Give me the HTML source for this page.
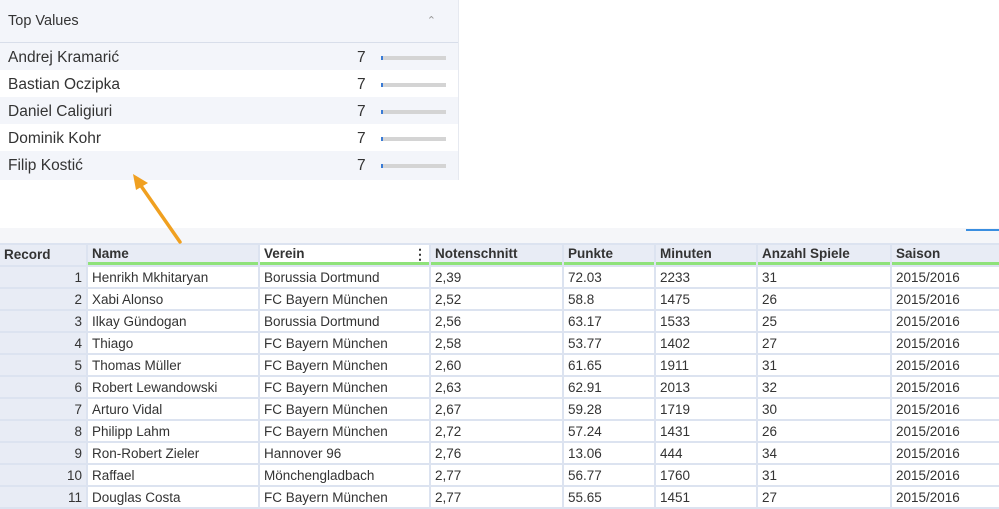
<!DOCTYPE html><html><head><style>
body{margin:0;width:999px;height:507px;overflow:hidden;background:#fff;font-family:"Liberation Sans",sans-serif;position:relative}
.panel{position:absolute;left:0;top:0;width:458px;height:180px;background:#f3f5fa;border-right:1px solid #e6e9f0}
.ph{height:42px;border-bottom:1px solid #d8deea;font-size:14.5px;color:#333;line-height:42px;padding-left:8px;position:relative}
.ph span{position:absolute;right:22px;top:0;color:#999;font-size:11px}
.r{height:27px;line-height:29px;font-size:15.5px;color:#333;padding-left:8px;position:relative}
.r.w{background:#fff}
.r b{font-weight:normal;position:absolute;left:357px}
.r i{position:absolute;left:381px;top:13px;width:63px;height:4px;background:#d4d4d4;border-left:2px solid #3a7bd5}
.strip{position:absolute;left:0;top:228px;width:999px;height:15px;background:#f5f6f9}
table{position:absolute;left:-2px;top:243px;border-collapse:separate;border-spacing:2px;background:#dce3f0;font-size:13.5px;color:#333;table-layout:fixed;width:1096px}
td,th{height:20px;padding:0 4px;white-space:nowrap;overflow:hidden;background:#fff;text-align:left}
th{background:#e8ecf5;font-weight:bold;height:16px;padding-top:1px;line-height:16px;border-bottom:3px solid #8fe27a;color:#333;vertical-align:bottom}
th.rec{border-bottom:none;height:20px;padding-top:0;vertical-align:middle}
td.rec{background:#e8ecf5;text-align:right}
</style></head><body>
<div class="panel"><div class="ph">Top Values<span>&#8963;</span></div>
<div class="r">Andrej Kramarić<b>7</b><i></i></div>
<div class="r w">Bastian Oczipka<b>7</b><i></i></div>
<div class="r">Daniel Caligiuri<b>7</b><i></i></div>
<div class="r w">Dominik Kohr<b>7</b><i></i></div>
<div class="r">Filip Kostić<b>7</b><i></i></div>
</div>
<div class="strip"></div>
<div style="position:absolute;left:966px;top:229px;width:33px;height:2px;background:#3a8ee0"></div>
<table>
<colgroup><col style="width:86px"><col style="width:170px"><col style="width:169px"><col style="width:131px"><col style="width:90px"><col style="width:100px"><col style="width:132px"><col style="width:200px"></colgroup>
<tr><th class="rec">Record</th><th>Name</th><th style="background:#fff;position:relative">Verein<span style="position:absolute;right:2px;font-size:14px">&#8942;</span></th><th>Notenschnitt</th><th>Punkte</th><th>Minuten</th><th>Anzahl Spiele</th><th>Saison</th></tr>
<tr><td class="rec">1</td><td>Henrikh Mkhitaryan</td><td>Borussia Dortmund</td><td>2,39</td><td>72.03</td><td>2233</td><td>31</td><td>2015/2016</td></tr>
<tr><td class="rec">2</td><td>Xabi Alonso</td><td>FC Bayern München</td><td>2,52</td><td>58.8</td><td>1475</td><td>26</td><td>2015/2016</td></tr>
<tr><td class="rec">3</td><td>Ilkay Gündogan</td><td>Borussia Dortmund</td><td>2,56</td><td>63.17</td><td>1533</td><td>25</td><td>2015/2016</td></tr>
<tr><td class="rec">4</td><td>Thiago</td><td>FC Bayern München</td><td>2,58</td><td>53.77</td><td>1402</td><td>27</td><td>2015/2016</td></tr>
<tr><td class="rec">5</td><td>Thomas Müller</td><td>FC Bayern München</td><td>2,60</td><td>61.65</td><td>1911</td><td>31</td><td>2015/2016</td></tr>
<tr><td class="rec">6</td><td>Robert Lewandowski</td><td>FC Bayern München</td><td>2,63</td><td>62.91</td><td>2013</td><td>32</td><td>2015/2016</td></tr>
<tr><td class="rec">7</td><td>Arturo Vidal</td><td>FC Bayern München</td><td>2,67</td><td>59.28</td><td>1719</td><td>30</td><td>2015/2016</td></tr>
<tr><td class="rec">8</td><td>Philipp Lahm</td><td>FC Bayern München</td><td>2,72</td><td>57.24</td><td>1431</td><td>26</td><td>2015/2016</td></tr>
<tr><td class="rec">9</td><td>Ron-Robert Zieler</td><td>Hannover 96</td><td>2,76</td><td>13.06</td><td>444</td><td>34</td><td>2015/2016</td></tr>
<tr><td class="rec">10</td><td>Raffael</td><td>Mönchengladbach</td><td>2,77</td><td>56.77</td><td>1760</td><td>31</td><td>2015/2016</td></tr>
<tr><td class="rec">11</td><td>Douglas Costa</td><td>FC Bayern München</td><td>2,77</td><td>55.65</td><td>1451</td><td>27</td><td>2015/2016</td></tr>
</table>
<svg style="position:absolute;left:0;top:0" width="999" height="507"><line x1="180" y1="242" x2="139" y2="183" stroke="#f0a020" stroke-width="3.5" stroke-linecap="round"/><polygon points="133,174 148,183 136,190" fill="#f0a020"/></svg>
</body></html>
